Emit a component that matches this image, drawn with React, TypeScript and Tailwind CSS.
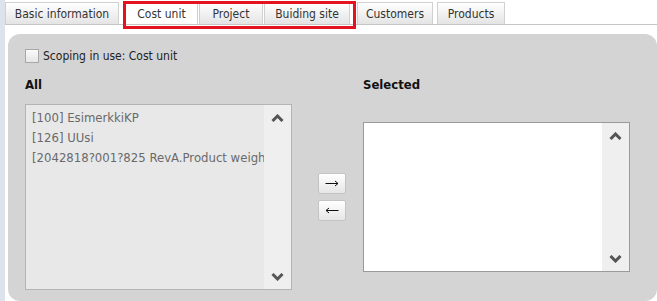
import React from 'react';

type Tab = { label: string; w: string; ml: string; active?: boolean };

const tabs: Tab[] = [
  { label: 'Basic information', w: 'w-[114px]', ml: 'ml-0' },
  { label: 'Cost unit', w: 'w-[73px]', ml: 'ml-[6px]', active: true },
  { label: 'Project', w: 'w-[64px]', ml: 'ml-[1px]' },
  { label: 'Buiding site', w: 'w-[86px]', ml: 'ml-[1px]' },
  { label: 'Customers', w: 'w-[76px]', ml: 'ml-[7px]' },
  { label: 'Products', w: 'w-[68px]', ml: 'ml-[4px]' },
];

const items = ['[100] EsimerkkiKP', '[126] UUsi', '[2042818?001?825 RevA.Product weight'];

function Chevron({ up }: { up?: boolean }) {
  return (
    <svg width="13" height="8" viewBox="0 0 13 8" className="block">
      <polyline
        points={up ? '1.5,7 6.5,2 11.5,7' : '1.5,1 6.5,6 11.5,1'}
        fill="none"
        stroke="#555"
        strokeWidth="3"
      />
    </svg>
  );
}

function Arrow({ left }: { left?: boolean }) {
  return (
    <svg width="14" height="7" viewBox="0 0 14 7" className={`block ${left ? 'rotate-180' : ''}`}>
      <line x1="0.5" y1="3.5" x2="13" y2="3.5" stroke="#111" strokeWidth="1" />
      <polyline points="10,1 13,3.5 10,6" fill="none" stroke="#111" strokeWidth="1" />
    </svg>
  );
}

function ListBox({ data, disabled, h }: { data: string[]; disabled?: boolean; h: string }) {
  return (
    <div
      className={`flex w-[267px] ${h} border ${disabled ? 'border-[#b4b4b4] bg-[#e8e8e8]' : 'border-[#9a9a9a] bg-white'}`}
    >
      <div className="flex-1 overflow-hidden pl-[6px] pt-[3px] text-[13px]">
        {data.map((t) => (
          <div key={t} className="h-[20px] leading-[20px] whitespace-nowrap text-[#6a6a6a]">
            {t}
          </div>
        ))}
      </div>
      <div className="w-[27px] bg-[#efefef] flex flex-col items-center justify-between pt-[9px] pb-[8px]">
        <Chevron up />
        <Chevron />
      </div>
    </div>
  );
}

function ArrowButton({ left }: { left?: boolean }) {
  return (
    <button className="w-[28px] h-[21px] border border-[#c4c4c4] rounded-[2px] bg-gradient-to-b from-white to-[#e6e6e6] flex items-center justify-center">
      <Arrow left={left} />
    </button>
  );
}

export default function App() {
  return (
    <div
      className="relative w-[657px] h-[301px] bg-white overflow-hidden flex text-[12px] text-[#222]"
      style={{ fontFamily: 'Tahoma, "DejaVu Sans Condensed", "DejaVu Sans", sans-serif' }}
    >
      <div className="w-[5px] bg-[#dde3ec] shrink-0" />
      <div className="flex-1 flex flex-col">
        <div className="h-[25px] flex items-end border-b border-[#c6c6c6] pt-[2px]">
          {tabs.map((t) => (
            <div
              key={t.label}
              className={`${t.w} ${t.ml} h-[22px] flex items-center justify-center border border-b-0 border-[#d0d0d0] text-[#333] ${
                t.active ? 'bg-white' : 'bg-gradient-to-b from-white to-[#e4e4e4]'
              }`}
            >
              {t.label}
            </div>
          ))}
        </div>

        <div className="ml-[3px] mt-[9px] flex-1 rounded-[12px] bg-[#d4d4d4] pl-[17px] pt-[14px]">
          <label className="flex items-center gap-[4px] h-[15px]">
            <span className="w-[14px] h-[14px] border border-[#a8a8a8] bg-gradient-to-b from-[#fafafa] to-[#e6e6e6]" />
            <span className="text-[#222]">Scoping in use: Cost unit</span>
          </label>

          <div className="flex mt-[15px] h-[14px] items-center font-bold text-[13px] text-[#111]">
            <div className="w-[338px]">All</div>
            <div>Selected</div>
          </div>

          <div className="flex items-center mt-[12px] h-[186px]">
            <ListBox data={items} disabled h="h-[186px]" />
            <div className="flex flex-col gap-[6px] ml-[26px] mr-[17px]">
              <ArrowButton />
              <ArrowButton left />
            </div>
            <ListBox data={[]} h="h-[150px]" />
          </div>
        </div>
      </div>

      <div className="absolute left-[123px] top-[1px] w-[233px] h-[28px] border-[3px] border-[#e3141f]" />
    </div>
  );
}
